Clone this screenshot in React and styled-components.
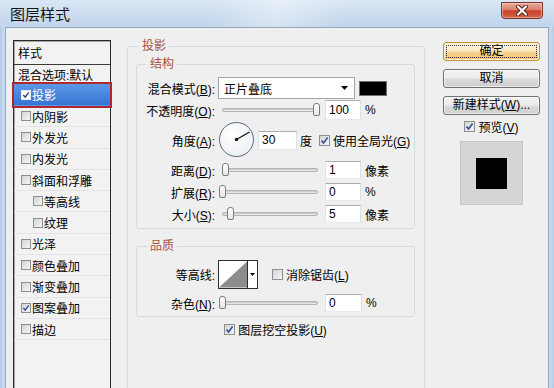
import React from 'react';
import styled, { createGlobalStyle, css } from 'styled-components';

const GlobalStyle = createGlobalStyle`
  * { box-sizing: border-box; }
  html, body { margin: 0; padding: 0; }
  body {
    width: 554px; height: 388px; overflow: hidden;
    background: #c3d6ec;
    font-family: "Liberation Sans", "Noto Sans CJK SC", sans-serif;
    font-size: 12px; color: #000;
  }
`;

const Window = styled.div`
  width: 554px; height: 388px; overflow: hidden;
  display: flex; flex-direction: column;
  background: linear-gradient(90deg, #b2c9e3 0, #c6d9ee 3px, #c6d9ee 551px, #b2c9e3 554px);
`;

const TitleBar = styled.div`
  height: 27px; flex: none; display: flex; align-items: flex-start;
  background:
    linear-gradient(104deg, rgba(255,255,255,0) 38%, rgba(255,255,255,0.35) 50%, rgba(255,255,255,0) 62%),
    linear-gradient(180deg, #dbe7f5 0%, #cbdcef 55%, #c1d5eb 100%);
`;

const Title = styled.div`
  padding: 5px 0 0 10px; font-size: 15px; line-height: 17px; color: #151515;
  font-family: "Noto Sans CJK SC", sans-serif;
`;

const CloseButton = styled.div`
  margin: 2px 11px 0 auto; width: 42px; height: 17px;
  border: 1px solid #7a3328; border-radius: 0 0 4px 4px;
  background: linear-gradient(180deg, #e9aa9a 0%, #d9806c 45%, #c8412c 52%, #d4634a 100%);
  box-shadow: inset 0 0 0 1px rgba(255,220,210,0.5);
  display: flex; align-items: center; justify-content: center;
`;

const Client = styled.div`
  flex: 1; margin: 0 5px; min-height: 0;
  display: flex; align-items: flex-start;
  background: #efefef;
  border: 1px solid #93a8c0; border-bottom: none;
  padding: 11px 8px 0 7px;
`;

/* ---------- style list ---------- */
const StyleList = styled.div`
  width: 98px; height: 370px; margin-top: 1px; flex: none;
  border: 1px solid #2a2a2a; background: #f2f2f2;
  box-shadow: inset 1px 1px 0 #a6a6a6;
`;

const ListHeader = styled.div`
  height: 24px; padding-left: 4px; display: flex; align-items: center;
  border-bottom: 1px solid #3a3a3a;
`;

const ListRow = styled.div`
  height: ${p => p.$h}px; display: flex; align-items: center; gap: 1px;
  padding-left: ${p => (p.$plain ? 4 : p.$sub ? 19 : 7)}px;
  border-bottom: 1px solid #e3e3e3; white-space: nowrap;
  ${p => p.$selected && css`
    background: linear-gradient(180deg, #5c98e6 0%, #3574d4 100%);
    color: #fff; border-bottom-color: transparent;
    outline: 2px solid #b0262f;
  `}
`;

/* ---------- checkbox ---------- */
const CheckBox = styled.span`
  flex: none; width: ${p => p.$size}px; height: ${p => p.$size}px;
  border: 1px solid ${p => (p.$light ? '#e8eef8' : '#8e8f8f')};
  background: ${p => (p.$light ? '#fff' : 'linear-gradient(135deg, #d4d4d4 0%, #f6f6f6 100%)')};
  display: inline-flex; align-items: center; justify-content: center;
`;

const Check = ({ checked, size = 11, light }) => (
  <CheckBox $size={size} $light={light}>
    {checked && (
      <svg width={size - 2} height={size - 2} viewBox="0 0 9 9">
        <path d="M1.5 4.6 L3.6 6.9 L7.6 1.6" fill="none" stroke={light ? '#2b3f73' : '#3550a0'} strokeWidth="1.6" />
      </svg>
    )}
  </CheckBox>
);

/* ---------- group boxes ---------- */
const OuterGroup = styled.fieldset`
  flex: none; width: 298px; height: 372px; margin: 0 0 0 16px;
  padding: 1px 9px 0 8px; min-width: 0;
  border: 1px solid #d2dae2; border-radius: 3px;
`;

const Group = styled.fieldset`
  margin: ${p => p.$mt || 0}px 0 0 0; min-width: 0;
  padding: ${p => p.$pt}px 0 ${p => p.$pb}px 0;
  border: 1px solid #d2dae2; border-radius: 3px;
`;

const Legend = styled.legend`
  margin-left: ${p => p.$ml}px; padding: 0 3px;
  color: #a9533b; line-height: 14px; font-size: 12px;
`;

const FormRow = styled.div`
  height: ${p => p.$h || 22}px; margin-top: ${p => p.$mt || 0}px;
  display: flex; align-items: center; white-space: nowrap;
  ${p => p.$center && css`justify-content: center; gap: 3px;`}
`;

const Label = styled.div`
  flex: none; width: 81px; padding-right: 3px; text-align: right;
`;

const Key = styled.span`text-decoration: underline;`;

const Select = styled.div`
  flex: none; width: 137px; height: 22px;
  border: 1px solid #9ea6b0; background: #fff;
  display: flex; align-items: center; justify-content: space-between;
  padding: 0 6px 0 5px;
`;

const Swatch = styled.div`
  flex: none; width: 28px; height: 15px; margin-left: 4px;
  background: #000; border: 1px solid #6f6f6f;
`;

const Field = styled.input`
  flex: none; width: ${p => p.$w}px; height: ${p => p.$h}px;
  margin: 0 0 0 ${p => p.$ml}px; padding: 0 0 0 3px;
  font: inherit; font-size: 12px; color: #000; background: #fff;
  border: 1px solid; border-color: #abadb3 #dbdfe6 #e3e9ef #e2e3ea;
  outline: none;
`;

const Unit = styled.span`margin-left: ${p => p.$ml || 4}px;`;

const SliderWrap = styled.div`
  position: relative; flex: none; width: 101px; height: 16px; margin-left: 1px;
`;

const Track = styled.div`
  position: absolute; left: 3px; right: 2px; top: 6px; height: 4px;
  border: 1px solid #b4b4b4; border-radius: 2px;
  background: #e4e4e4; box-shadow: inset 0 1px 0 #cdcdcd;
`;

const Thumb = styled.div`
  position: absolute; top: 1px; width: 7px; height: 13px;
  border: 1px solid #7c7c7c; border-radius: 3px 3px 2px 2px;
  background: linear-gradient(180deg, #ffffff 0%, #e6e6e6 100%);
`;

const Slider = ({ value, max = 100 }) => (
  <SliderWrap>
    <Track />
    <Thumb style={{ left: `${Math.round((value / max) * 94)}px` }} />
  </SliderWrap>
);

const DialSvg = styled.svg`flex: none; margin-left: 1px; display: block;`;

const Dial = ({ angle }) => {
  const r = (angle * Math.PI) / 180;
  const c = 17.5;
  const x = c + 15 * Math.cos(r);
  const y = c - 15 * Math.sin(r);
  return (
    <DialSvg width="36" height="36" viewBox="0 0 36 36">
      <defs>
        <radialGradient id="dialFill" cx="40%" cy="35%" r="70%">
          <stop offset="0" stopColor="#ffffff" />
          <stop offset="1" stopColor="#eceff3" />
        </radialGradient>
      </defs>
      <circle cx={c} cy={c} r="17" fill="url(#dialFill)" stroke="#56697f" strokeWidth="1" />
      <line x1={c} y1={c} x2={x} y2={y} stroke="#111" strokeWidth="1.2" />
      <circle cx={c} cy={c} r="1.7" fill="#111" />
    </DialSvg>
  );
};

const Contour = styled.div`
  flex: none; width: 40px; height: 29px; margin-left: 0;
  border: 1px solid #2c2c2c; background: #fff; display: flex;
`;

const ContourArrow = styled.div`
  flex: none; width: 10px; border-left: 1px solid #2c2c2c;
  display: flex; align-items: center; justify-content: center;
`;

const Spacer = styled.span`display: inline-block; width: ${p => p.$w}px; flex: none;`;

/* ---------- side buttons ---------- */
const Side = styled.div`
  flex: none; width: 97px; margin: 3px 0 0 18px;
  display: flex; flex-direction: column; align-items: center; gap: 8px;
`;

const Button = styled.button`
  width: 97px; height: 19px; padding: 0; margin: 0;
  font: inherit; font-size: 12px; color: #000; line-height: 15px;
  border: 1px solid #707070; border-radius: 3px;
  background: linear-gradient(180deg, #f3f3f3 0%, #ebebeb 48%, #dcdcdc 52%, #cdcdcd 100%);
  box-shadow: inset 0 0 0 1px rgba(255,255,255,0.6);
  ${p => p.$default && css`
    border-color: #c8912f;
    background: linear-gradient(180deg, #fdf5e2 0%, #fbe8c2 48%, #f7d595 52%, #f0c067 100%);
    box-shadow: inset 0 0 0 1px #fcefd0;
    outline: 1px dotted #333; outline-offset: -4px;
  `}
`;

const PreviewToggle = styled.div`
  margin-top: -4px; height: 14px; display: flex; align-items: center; gap: 3px; white-space: nowrap;
`;

const Preview = styled.div`
  margin-top: 0; width: 63px; height: 64px;
  background: #d5d5d5; border: 1px solid #c6c6c6;
  display: flex; align-items: center; justify-content: center;
`;

const PreviewSquare = styled.div`width: 31px; height: 31px; background: #000;`;

const Arrow = () => (
  <svg width="7" height="4" viewBox="0 0 7 4"><path d="M0 0 H7 L3.5 4 Z" fill="#000" /></svg>
);

const listItems = [
  { label: '内阴影' },
  { label: '外发光' },
  { label: '内发光' },
  { label: '斜面和浮雕' },
  { label: '等高线', sub: true },
  { label: '纹理', sub: true },
  { label: '光泽' },
  { label: '颜色叠加' },
  { label: '渐变叠加' },
  { label: '图案叠加', checked: true },
  { label: '描边' },
];

export default function App() {
  return (
    <>
      <GlobalStyle />
      <Window>
        <TitleBar>
          <Title>图层样式</Title>
          <CloseButton>
            <svg width="14" height="11" viewBox="0 0 14 11">
              <path d="M3 1.5 L11 9.5 M11 1.5 L3 9.5" stroke="#5a1e16" strokeWidth="4" strokeLinecap="round" />
              <path d="M3 1.5 L11 9.5 M11 1.5 L3 9.5" stroke="#fff" strokeWidth="2.2" strokeLinecap="round" />
            </svg>
          </CloseButton>
        </TitleBar>

        <Client>
          <StyleList>
            <ListHeader>样式</ListHeader>
            <ListRow $plain $h={19}>混合选项:默认</ListRow>
            <ListRow $selected $h={22}>
              <Check checked light size={10} />投影
            </ListRow>
            {listItems.map(item => (
              <ListRow key={item.label} $sub={item.sub} $h={21.3}>
                <Check checked={item.checked} size={10} />
                {item.label}
              </ListRow>
            ))}
          </StyleList>

          <OuterGroup>
            <Legend $ml={3}>投影</Legend>
            <Group $mt={3} $pt={6} $pb={3}>
              <Legend $ml={10}>结构</Legend>
              <FormRow>
                <Label>混合模式(<Key>B</Key>):</Label>
                <Select>正片叠底<Arrow /></Select>
                <Swatch />
              </FormRow>
              <FormRow>
                <Label>不透明度(<Key>O</Key>):</Label>
                <Slider value={100} />
                <Field $w={36} $h={20} $ml={5} value="100" readOnly />
                <Unit>%</Unit>
              </FormRow>
              <FormRow $h={38}>
                <Label>角度(<Key>A</Key>):</Label>
                <Dial angle={30} />
                <Field $w={39} $h={19} $ml={3} value="30" readOnly />
                <Unit $ml={3}>度</Unit>
                <Spacer $w={7} />
                <Check checked />
                <Unit $ml={3}>使用全局光(<Key>G</Key>)</Unit>
              </FormRow>
              <FormRow>
                <Label>距离(<Key>D</Key>):</Label>
                <Slider value={1} max={30} />
                <Field $w={36} $h={18} $ml={5} value="1" readOnly />
                <Unit>像素</Unit>
              </FormRow>
              <FormRow>
                <Label>扩展(<Key>R</Key>):</Label>
                <Slider value={0} />
                <Field $w={36} $h={18} $ml={5} value="0" readOnly />
                <Unit>%</Unit>
              </FormRow>
              <FormRow>
                <Label>大小(<Key>S</Key>):</Label>
                <Slider value={5} max={60} />
                <Field $w={36} $h={18} $ml={5} value="5" readOnly />
                <Unit>像素</Unit>
              </FormRow>
            </Group>

            <Group $mt={10} $pt={6} $pb={2}>
              <Legend $ml={10}>品质</Legend>
              <FormRow $h={30}>
                <Label>等高线:</Label>
                <Contour>
                  <svg width="29" height="27" viewBox="0 0 29 27">
                    <rect width="29" height="27" fill="#fff" />
                    <path d="M0 27 L29 0 L29 27 Z" fill="#8c8c8c" />
                  </svg>
                  <ContourArrow>
                    <svg width="5" height="3" viewBox="0 0 5 3"><path d="M0 0 H5 L2.5 3 Z" fill="#000" /></svg>
                  </ContourArrow>
                </Contour>
                <Spacer $w={14} />
                <Check />
                <Unit $ml={3}>消除锯齿(<Key>L</Key>)</Unit>
              </FormRow>
              <FormRow $mt={3}>
                <Label>杂色(<Key>N</Key>):</Label>
                <Slider value={0} />
                <Field $w={37} $h={18} $ml={5} value="0" readOnly />
                <Unit>%</Unit>
              </FormRow>
            </Group>

            <FormRow $h={20} $mt={2} $center>
              <Check checked />
              <span>图层挖空投影(<Key>U</Key>)</span>
            </FormRow>
          </OuterGroup>

          <Side>
            <Button $default>确定</Button>
            <Button>取消</Button>
            <Button>新建样式(<Key>W</Key>)...</Button>
            <PreviewToggle>
              <Check checked />
              <span>预览(<Key>V</Key>)</span>
            </PreviewToggle>
            <Preview><PreviewSquare /></Preview>
          </Side>
        </Client>
      </Window>
    </>
  );
}
